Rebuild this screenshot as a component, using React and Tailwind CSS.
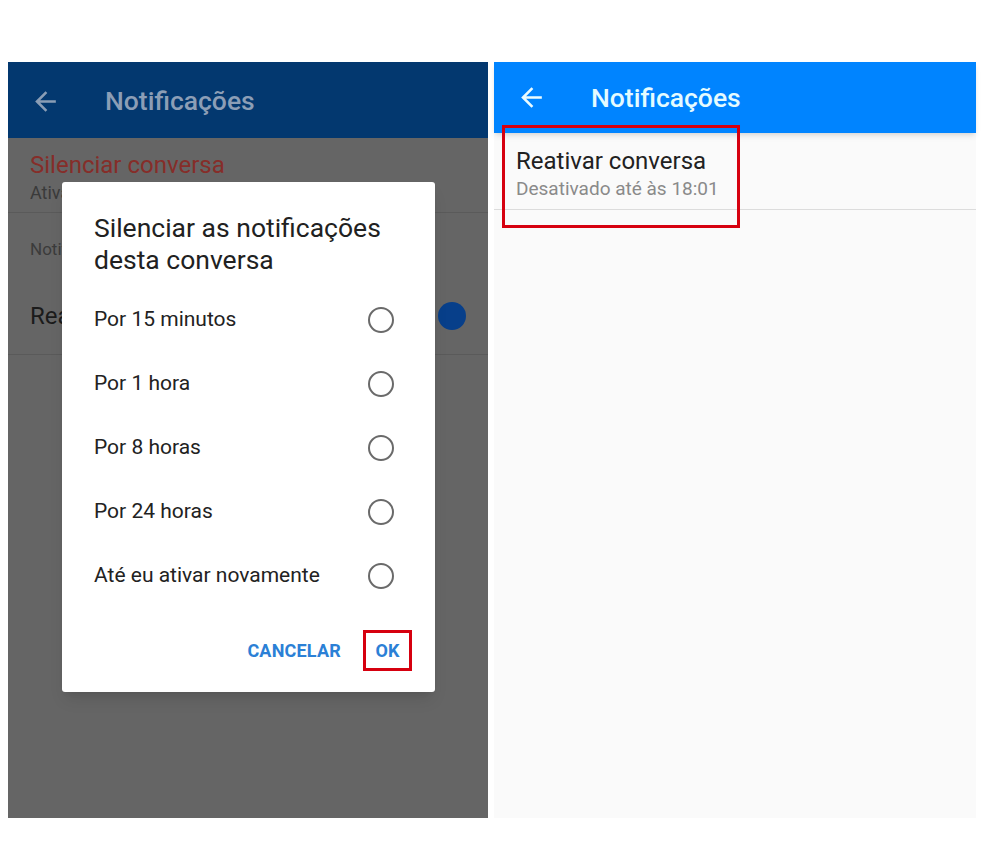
import React from 'react';

const font = { fontFamily: 'Roboto, "Noto Sans", sans-serif' };

// material style back arrow
const BackArrow = ({ className }) => (
  <svg viewBox="0 0 24 24" className={className} fill="currentColor">
    <path d="M20 11H7.83l5.59-5.59L12 4l-8 8 8 8 1.41-1.41L7.83 13H20v-2z" />
  </svg>
);

const options = [
  'Por 15 minutos',
  'Por 1 hora',
  'Por 8 horas',
  'Por 24 horas',
  'Até eu ativar novamente',
];

const MuteDialog = () => (
  <div className="absolute left-[54px] top-[44px] w-[373px] h-[510px] bg-white rounded-[3px] shadow-lg flex flex-col">
    <div className="pt-[30px] pl-[32px] pr-4 text-[26.5px] leading-[32px] text-[#212121]">
      Silenciar as notificações
      <br />
      desta conversa
    </div>
    <div className="mt-[12px] flex flex-col">
      {options.map((opt) => (
        <div key={opt} className="h-[64px] flex items-center justify-between pl-[32px] pr-[41px]">
          <span className="text-[21px] text-[#222]">{opt}</span>
          <span className="w-[26px] h-[26px] rounded-full border-2 border-[#6a6a6a]"></span>
        </div>
      ))}
    </div>
    <div className="flex-1 flex items-center justify-end pr-[23px] gap-[22px]">
      <span className="text-[18px] font-bold text-[#2b80d6] tracking-[0.2px]">CANCELAR</span>
      <span className="w-[49px] h-[41px] border-[3px] border-[#d6000f] flex items-center justify-center text-[18px] font-bold text-[#2b80d6]">
        OK
      </span>
    </div>
  </div>
);

const LeftScreen = () => (
  <div className="w-[480px] h-[756px] flex flex-col">
    <div className="h-[76px] bg-[#03386f] flex items-center shrink-0 pt-[2px]">
      <BackArrow className="w-[31px] h-[31px] ml-[22px] text-[#8a9db5]" />
      <span className="ml-[44px] text-[26.5px] font-medium text-[#8c9eb6]">Notificações</span>
    </div>
    <div className="flex-1 bg-[#656565] relative">
      <div className="h-[75px] pl-[22px] pt-[12px] border-b border-[#5a5a5a]">
        <div className="text-[24px] leading-[30px] text-[#862d29]">Silenciar conversa</div>
        <div className="w-[32px] overflow-hidden whitespace-nowrap text-[18px] leading-[26px] text-[#3a3a3a]">Ativado</div>
      </div>
      <div className="h-[64px] pl-[22px] pt-[24px]">
        <div className="w-[32px] overflow-hidden whitespace-nowrap text-[17px] leading-[24px] text-[#3b3b3b]">Notificações</div>
      </div>
      <div className="h-[78px] pl-[22px] pr-[22px] flex items-center justify-between border-b border-[#5a5a5a]">
        <span className="w-[32px] overflow-hidden whitespace-nowrap text-[24px] text-[#1b1b1b]">Reativar</span>
        <span className="w-[28px] h-[28px] rounded-full bg-[#073f8a]"></span>
      </div>
      <MuteDialog />
    </div>
  </div>
);

const RightScreen = () => (
  <div className="w-[482px] h-[756px] flex flex-col">
    <div className="h-[71px] bg-[#0084ff] flex items-center shrink-0 shadow-md relative z-10">
      <BackArrow className="w-[31px] h-[31px] ml-[22px] text-[#eafcff]" />
      <span className="ml-[44px] text-[26.5px] font-medium text-[#e4fbff]">Notificações</span>
    </div>
    <div className="flex-1 bg-[#fafafa] relative">
      <div className="h-[77px] pl-[22px] pt-[13px] border-b border-[#dcdcdc]">
        <div className="text-[24px] leading-[30px] text-[#212121]">Reativar conversa</div>
        <div className="text-[19px] leading-[26px] text-[#8a8a8a]">Desativado até às 18:01</div>
      </div>
      <div className="absolute left-[8px] top-[-8px] w-[238px] h-[103px] border-[3px] border-[#d6000f] z-20"></div>
    </div>
  </div>
);

export default function App() {
  return (
    <div className="w-[984px] h-[842px] bg-white flex pt-[62px] pl-[8px] gap-[6px]" style={font}>
      <LeftScreen />
      <RightScreen />
    </div>
  );
}
